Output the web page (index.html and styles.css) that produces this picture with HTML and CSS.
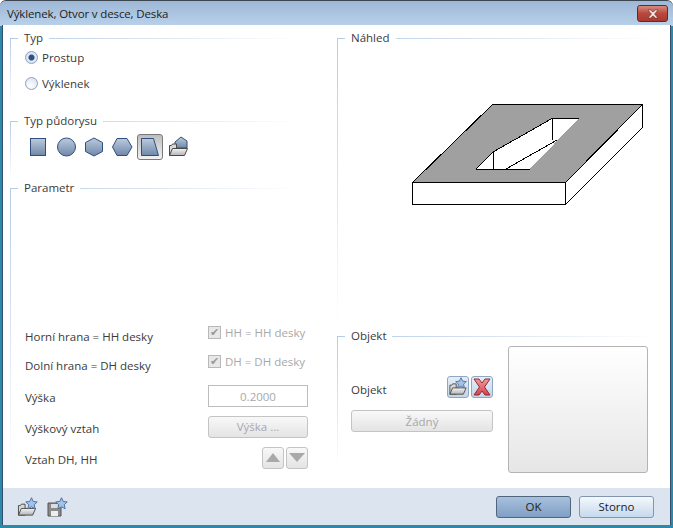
FILE: index.html
```html
<!DOCTYPE html>
<html lang="en">

<head>
    <meta charset="UTF-8">
    <meta name="viewport" content="width=device-width, initial-scale=1.0">
    <title>Výklenek, Otvor v desce, Deska</title>
    <link rel="stylesheet" href="styles.css">
</head>

<body>
    <svg class="defs">
        <defs>
            <linearGradient id="steel" x1="0" y1="0" x2="0" y2="1">
                <stop offset="0" stop-color="#bccbdd" />
                <stop offset="1" stop-color="#6f88a8" />
            </linearGradient>
            <linearGradient id="paper" x1="0" y1="0" x2="0" y2="1">
                <stop offset="0" stop-color="#f4f4f4" />
                <stop offset="1" stop-color="#b4b4b4" />
            </linearGradient>
            <linearGradient id="redx" x1="0" y1="0" x2="0" y2="1">
                <stop offset="0" stop-color="#f19a9e" />
                <stop offset="1" stop-color="#d8404a" />
            </linearGradient>
            <symbol id="folder" viewBox="0 0 20 20">
                <path d="M1 18V8h2l1-1.500h4V18z" fill="#d8d8d8" stroke="#4a4a4a" />
                <path d="M1 18l3-7h15l-3 7z" fill="url(#paper)" stroke="#4a4a4a" />
            </symbol>
            <symbol id="star" viewBox="0 0 14 14">
                <path d="M7 .8l1.900 4 4.300.5-3.200 3 .9 4.400L7 10.500l-3.900 2.200.9-4.400-3.200-3 4.300-.5z" fill="#a3c2e6" stroke="#4a6d9c" stroke-linejoin="round" />
            </symbol>
        </defs>
    </svg>

    <div class="window">
        <div class="titlebar">
            <span class="title">Výklenek, Otvor v desce, Deska</span>
            <button class="close" type="button">
                <svg width="16" height="10" viewBox="0 0 16 10">
                    <path d="M3 1h2.500L8 3.200 10.500 1H13l-3.500 4L13 9h-2.500L8 6.800 5.500 9H3l3.500-4z" fill="#f2f2f2" stroke="#6e2a24" stroke-width=".6" />
                </svg>
            </button>
        </div>

        <div class="client">
            <div class="columns">
                <div class="col-left">
                    <section class="group group-typ">
                        <h2 class="legend">Typ</h2>
                        <label class="radio-row"><span class="radio radio-on"></span>Prostup</label>
                        <label class="radio-row"><span class="radio"></span>Výklenek</label>
                    </section>

                    <section class="group group-plan">
                        <h2 class="legend">Typ půdorysu</h2>
                        <div class="toolbar">
                            <button class="tool" type="button">
                                <svg width="26" height="26" viewBox="0 0 26 26"><rect x="5.500" y="4.500" width="15" height="17" fill="url(#steel)" stroke="#2f4f7f" /></svg>
                            </button>
                            <button class="tool" type="button">
                                <svg width="26" height="26" viewBox="0 0 26 26"><circle cx="13.500" cy="13" r="9" fill="url(#steel)" stroke="#2f4f7f" /></svg>
                            </button>
                            <button class="tool" type="button">
                                <svg width="26" height="26" viewBox="0 0 26 26"><path d="M13 4l8.500 4.500v9L13 22l-8.500-4.500v-9z" fill="url(#steel)" stroke="#2f4f7f" /></svg>
                            </button>
                            <button class="tool" type="button">
                                <svg width="26" height="26" viewBox="0 0 26 26"><path d="M8 4.500h10l5 8.500-5 8.500H8L3.500 13z" fill="url(#steel)" stroke="#2f4f7f" /></svg>
                            </button>
                            <button class="tool tool-on" type="button">
                                <svg width="24" height="24" viewBox="0 0 24 24"><path d="M3.500 3.500h12l5 17h-17z" fill="url(#steel)" stroke="#2f4f7f" /></svg>
                            </button>
                            <button class="tool" type="button">
                                <svg width="26" height="26" viewBox="0 0 26 26">
                                    <path d="M10 8l6-5 6 4v7H10z" fill="url(#steel)" stroke="#2f4f7f" />
                                    <use href="#folder" x="3.500" y="3.500" width="20" height="20" />
                                </svg>
                            </button>
                        </div>
                    </section>

                    <section class="group group-param">
                        <h2 class="legend">Parametr</h2>
                        <div class="param-rows">
                            <div class="row">
                                <span class="row-label">Horní hrana = HH desky</span>
                                <label class="check check-high"><span class="checkbox">✔</span>HH = HH desky</label>
                            </div>
                            <div class="row">
                                <span class="row-label">Dolní hrana = DH desky</span>
                                <label class="check check-high"><span class="checkbox">✔</span>DH = DH desky</label>
                            </div>
                            <div class="row row-height">
                                <span class="row-label">Výška</span>
                                <input class="field" type="text" value="0.2000" disabled>
                            </div>
                            <div class="row">
                                <span class="row-label">Výškový vztah</span>
                                <button class="btn-off" type="button" disabled>Výška ...</button>
                            </div>
                            <div class="row row-last">
                                <span class="row-label">Vztah DH, HH</span>
                                <div class="arrows">
                                    <button class="arrow" type="button" disabled>
                                        <svg width="14" height="9" viewBox="0 0 14 9"><path d="M7 0l7 9H0z" fill="#a9a9a9" /></svg>
                                    </button>
                                    <button class="arrow" type="button" disabled>
                                        <svg width="16" height="9" viewBox="0 0 16 9"><path d="M8 9L0 0h16z" fill="#a9a9a9" /></svg>
                                    </button>
                                </div>
                            </div>
                        </div>
                    </section>
                </div>

                <div class="col-right">
                    <section class="group group-preview">
                        <h2 class="legend">Náhled</h2>
                        <svg class="drawing" width="240" height="110" viewBox="411 100 240 110" shape-rendering="crispEdges">
                            <path d="M412.500 182.500L492.500 104.500H642.500L565.500 182.500z" fill="#a0a0a0" stroke="#000" />
                            <path d="M412.500 182.500h153v22h-153z" fill="#fff" stroke="#000" />
                            <path d="M565.500 182.500L642.500 104.500v23L565.500 204.500z" fill="#fff" stroke="#000" />
                            <path d="M476 169L493 152 552 118H579L530 169z" fill="#fff" />
                            <path d="M476 169.500H530M493 152L552 118.500H579M476 169L493 152" fill="none" stroke="#000" />
                            <path d="M493.500 152v17M552.500 118v22M506 169l51-29" fill="none" stroke="#000" />
                        </svg>
                    </section>

                    <section class="group group-object">
                        <h2 class="legend">Objekt</h2>
                        <div class="object-body">
                            <div class="object-side">
                                <div class="object-row">
                                    <span class="row-label object-label">Objekt</span>
                                    <div class="arrows">
                                        <button class="arrow arrow-blue" type="button">
                                            <svg width="20" height="20" viewBox="0 0 20 20">
                                                <use href="#folder" x="1" y="1" width="18" height="18" />
                                                <use href="#star" x="7" y="0" width="12" height="12" />
                                            </svg>
                                        </button>
                                        <button class="arrow arrow-blue" type="button">
                                            <svg width="20" height="20" viewBox="0 0 20 20"><path d="M2 2h5l3 4 3-4h5l-5.500 8 5.500 8h-5l-3-4-3 4H2l5.500-8z" fill="url(#redx)" stroke="#8e2b33" /></svg>
                                        </button>
                                    </div>
                                </div>
                                <button class="btn-off btn-wide" type="button" disabled>Žádný</button>
                            </div>
                            <div class="object-thumb"></div>
                        </div>
                    </section>
                </div>
            </div>

            <div class="footer">
                <div class="footer-icons">
                    <svg width="22" height="20" viewBox="0 0 22 20">
                        <use href="#folder" x="0" y="1" width="20" height="19" />
                        <use href="#star" x="8" y="0" width="13" height="13" />
                    </svg>
                    <svg width="22" height="20" viewBox="0 0 22 20">
                        <path d="M1 6h13v13H1z" fill="#8a8a8a" stroke="#555" />
                        <path d="M4 7h7v4H4z" fill="#ddd" />
                        <path d="M4 14h7v5H4z" fill="#eee" />
                        <use href="#star" x="8" y="0" width="13" height="13" />
                    </svg>
                </div>
                <div class="footer-buttons">
                    <button class="btn btn-default" type="button">OK</button>
                    <button class="btn" type="button">Storno</button>
                </div>
            </div>
        </div>
    </div>
</body>

</html>
```

FILE: styles.css
```css
* {
    box-sizing: border-box;
}

body {
    margin: 0;
    font-family: 'Open Sans', 'Liberation Sans', sans-serif;
    font-size: 11.5px;
    color: #3a3a3a;
    background: #fff;
}

.defs {
    display: block;
    width: 0;
    height: 0;
}

.window {
    display: flex;
    flex-direction: column;
    width: 673px;
    height: 528px;
    padding: 0 2px 3px;
    background: linear-gradient(#9db8d6, #b9d1ea 25px, #2d89a8 25px);
    border-top: 1px solid #3c4650;
    border-radius: 6px 6px 0 0;
}

.titlebar {
    display: flex;
    justify-content: space-between;
    height: 24px;
    padding: 4px 3px 0 5px;
    flex: none;
}

.title {
    font-size: 11.5px;
    letter-spacing: -0.13px;
    color: #222;
    line-height: 18px;
}

.close {
    width: 31px;
    height: 17px;
    padding: 0;
    display: flex;
    align-items: center;
    justify-content: center;
    background: linear-gradient(#d98a7f, #b9483c 50%, #a83a2f);
    border: 1px solid #5e2a2a;
    border-radius: 3px;
}

.client {
    flex: 1;
    display: flex;
    flex-direction: column;
    min-height: 0;
    background: #fff;
    border-left: 1px solid #34506e;
    border-right: 1px solid #34506e;
}

.columns {
    flex: 1;
    display: flex;
    padding: 13px 0 0 7px;
    min-height: 0;
}

.col-left {
    width: 327px;
    flex: none;
}

.col-right {
    flex: 1;
}

.group {
    display: flow-root;
    background:
        linear-gradient(to right, #b5cbe4, #fff 97%) top left / 100% 1px no-repeat,
        linear-gradient(#b5cbe4, #fff 97%) top left / 1px 100% no-repeat;
}

.legend {
    width: fit-content;
    margin: -7px 0 0 8px;
    padding: 0 6px;
    background: #fff;
    font-size: 11.5px;
    font-weight: normal;
    line-height: 14px;
}

.group-typ,
.group-plan,
.group-param {
    width: 300px;
}

.group-typ {
    height: 70px;
    margin-bottom: 13px;
}

.radio-row {
    display: flex;
    align-items: center;
    gap: 4px;
    height: 26px;
    padding-left: 15px;
}

.legend + .radio-row {
    margin-top: -1px;
}

.radio {
    width: 13px;
    height: 13px;
    border: 1px solid #8ea1b8;
    border-radius: 50%;
    background: radial-gradient(circle at 40% 70%, #fff, #d4deeb);
}

.radio-on {
    background: radial-gradient(circle, #2f4f8a 0 2.500px, #dfe6f0 3.500px);
}

.group-plan {
    height: 60px;
    margin-bottom: 7px;
}

.toolbar {
    display: flex;
    gap: 2px;
    padding: 6px 0 0 15px;
}

.tool {
    width: 26px;
    height: 26px;
    padding: 0;
    display: flex;
    align-items: center;
    justify-content: center;
    background: none;
    border: 0;
}

.tool-on {
    background: linear-gradient(#bdbdbd, #f2f2f2);
    border: 1px solid #7a7a7a;
    border-radius: 3px;
}

.group-param {
    height: 293px;
}

.param-rows {
    padding: 125px 0 0 15px;
}

.row {
    display: grid;
    grid-template-columns: 183px 100px;
    align-items: center;
    height: 29px;
}

.row-height {
    height: 32px;
    margin-top: 2px;
}

.row-last {
    margin-top: 2px;
}

.row-label {
    white-space: nowrap;
    margin-top: 3px;
}

.check {
    display: flex;
    align-items: center;
    gap: 4px;
    color: #a8a8a8;
    white-space: nowrap;
}

.check-high {
    margin-bottom: 4px;
}

.checkbox {
    width: 13px;
    height: 13px;
    display: flex;
    align-items: center;
    justify-content: center;
    border: 1px solid #b8b8b8;
    background: #e8e8e8;
    color: #9a9a9a;
    font-family: 'DejaVu Sans', sans-serif;
    font-size: 11px;
    line-height: 1;
}

.field {
    width: 100px;
    height: 22px;
    padding: 0 4px;
    border: 1px solid #bdbdbd;
    background: #fff;
    color: #a8a8a8;
    font: inherit;
    text-align: center;
}

.btn-off {
    height: 22px;
    width: 100px;
    padding: 0;
    border: 1px solid #c4c4c4;
    border-radius: 3px;
    background: linear-gradient(#f8f8f8, #e4e4e4);
    color: #a8a8a8;
    font: inherit;
}

.btn-wide {
    width: 142px;
}

.arrows {
    display: flex;
    justify-content: flex-end;
    gap: 2px;
}

.arrow {
    width: 22px;
    height: 22px;
    padding: 0;
    display: flex;
    align-items: center;
    justify-content: center;
    border: 1px solid #c4c4c4;
    border-radius: 3px;
    background: linear-gradient(#f8f8f8, #e4e4e4);
}

.arrow-blue {
    border-color: #8ea7c4;
    background: linear-gradient(#e6eef7, #c2d5ea);
}

.drawing {
    display: block;
    margin: 55px 0 0 74px;
}

.group-preview {
    height: 298px;
}

.group-object {
    height: 136px;
}

.object-body {
    display: flex;
    gap: 15px;
    padding: 3px 0 0 14px;
}

.object-side {
    width: 142px;
    padding-top: 30px;
}

.object-row {
    display: flex;
    justify-content: space-between;
    align-items: center;
    margin-bottom: 12px;
}

.object-label {
    margin-top: 4px;
}

.object-thumb {
    width: 140px;
    height: 127px;
    border: 1px solid #b4b4b4;
    border-radius: 3px;
    background: linear-gradient(#fff, #e6e6e6);
}

.footer {
    flex: none;
    height: 37px;
    display: flex;
    justify-content: space-between;
    align-items: center;
    padding: 0 16px 0 14px;
    background: #dce4ef;
}

.footer-icons {
    display: flex;
    gap: 8px;
}

.footer-buttons {
    display: flex;
    gap: 8px;
}

.btn {
    width: 75px;
    height: 22px;
    padding: 0;
    border: 1px solid #8296ae;
    border-radius: 3px;
    background: linear-gradient(#f4f8fc, #c6d9ee);
    color: #222;
    font: inherit;
}

.btn-default {
    background: linear-gradient(#a8c0dc, #7f9fc4);
    border-color: #50667f;
}
```
